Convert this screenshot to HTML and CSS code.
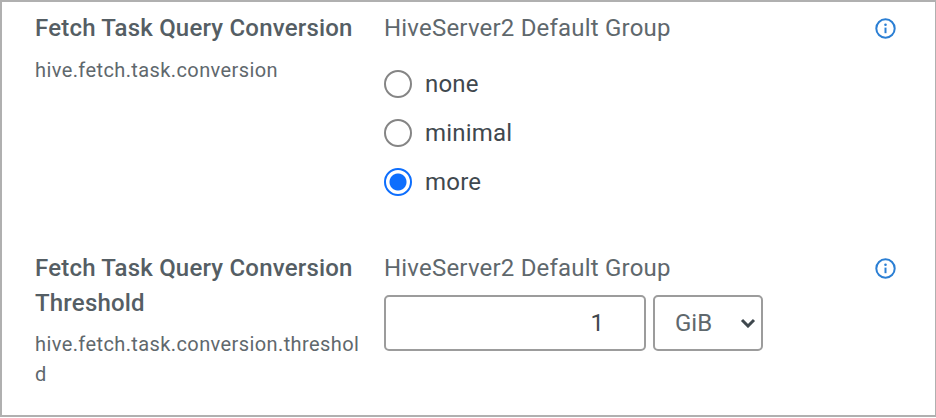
FILE: index.html
```html
<!DOCTYPE html>
<html lang="en">
<head>
    <meta charset="UTF-8">
    <title>Hive Configuration</title>
    <link rel="stylesheet" href="styles.css">
</head>
<body>
    <div class="panel">
        <div class="config-row first">
            <div class="config-name">
                <div class="label">Fetch Task Query Conversion</div>
                <div class="key">hive.fetch.task.conversion</div>
            </div>
            <div class="config-value">
                <div class="scope">HiveServer2 Default Group</div>
                <div class="radios">
                    <label class="radio"><input type="radio" name="conv"><span>none</span></label>
                    <label class="radio"><input type="radio" name="conv"><span>minimal</span></label>
                    <label class="radio"><input type="radio" name="conv" checked><span>more</span></label>
                </div>
            </div>
            <svg class="info" viewBox="0 0 21 21"><circle cx="10.5" cy="10.5" r="9.2"/><circle class="dot" cx="10.5" cy="6.8" r="1.3"/><path d="M10.5 9.6v5.6"/></svg>
        </div>
        <div class="config-row second">
            <div class="config-name">
                <div class="label">Fetch Task Query Conversion Threshold</div>
                <div class="key">hive.fetch.task.conversion.threshold</div>
            </div>
            <div class="config-value">
                <div class="scope">HiveServer2 Default Group</div>
                <div class="size-inputs">
                    <input class="num" type="text" value="1">
                    <div class="unit-wrap">
                        <select class="unit"><option>GiB</option></select>
                        <svg class="chevron" viewBox="0 0 16 10"><path d="M2 2l6 6 6-6"/></svg>
                    </div>
                </div>
            </div>
            <svg class="info" viewBox="0 0 21 21"><circle cx="10.5" cy="10.5" r="9.2"/><circle class="dot" cx="10.5" cy="6.8" r="1.3"/><path d="M10.5 9.6v5.6"/></svg>
        </div>
    </div>
</body>
</html>
```
FILE: styles.css
```css
html, body { margin: 0; padding: 0; background: #fff; }
body { font-family: "Roboto", "Liberation Sans", sans-serif; color: #5f686d; height: 418px; overflow: hidden; }
.panel {
    width: 936px; height: 417px; box-sizing: border-box;
    border: 2px solid #b0b0b0; border-right-width: 1px;
}
.config-row { display: flex; align-items: flex-start; padding: 9px 39px 0 33px; }
.config-row.first { height: 240px; box-sizing: border-box; }
.config-name { width: 349px; flex: none; }
.label { font-size: 24px; line-height: 35px; font-weight: 500; letter-spacing: 0.2px; width: 325px; color: #555e64; }
.key { font-size: 20px; line-height: 30px; margin-top: 8px; width: 325px; overflow-wrap: anywhere; letter-spacing: 0.4px; }
.first .key { margin-top: 9px; }
.config-value { flex: 1; }
.scope { font-size: 24px; line-height: 35px; letter-spacing: 0.2px; }
.radios { margin-top: 13px; }
.radio { display: flex; align-items: center; height: 49px; font-size: 24px; color: #3f484e; letter-spacing: 0.2px; }
.radio input {
    appearance: none; width: 28px; height: 28px; margin: 0 13px 0 0; border: 2px solid #858585;
    border-radius: 50%; background: #fff; box-sizing: border-box;
}
.radio input:checked { border-color: #0d6efd; background: radial-gradient(circle, #0d6efd 0 8px, #fff 9px); }
.size-inputs { display: flex; gap: 7px; margin-top: 9px; }
.num {
    width: 262px; height: 56px; box-sizing: border-box; border: 2px solid #9c9c9c; border-radius: 5px;
    text-align: right; font: 24px "Roboto", sans-serif; color: #3f484e; padding: 0 40px 0 0;
}
.unit-wrap { position: relative; width: 110px; height: 56px; }
.unit {
    appearance: none; width: 100%; height: 100%; box-sizing: border-box; border: 2px solid #9c9c9c; border-radius: 5px;
    font: 24px "Roboto", sans-serif; color: #5f686d; background: #fff; padding-left: 20px;
}
.chevron { position: absolute; top: 23px; right: 7px; width: 16px; height: 10px; fill: none; stroke: #3f484e; stroke-width: 3; }
.info { width: 21px; height: 21px; flex: none; fill: none; stroke: #2b7fd4; stroke-width: 2; margin-top: 7px; }
.info .dot { fill: #2b7fd4; stroke: none; }
```
